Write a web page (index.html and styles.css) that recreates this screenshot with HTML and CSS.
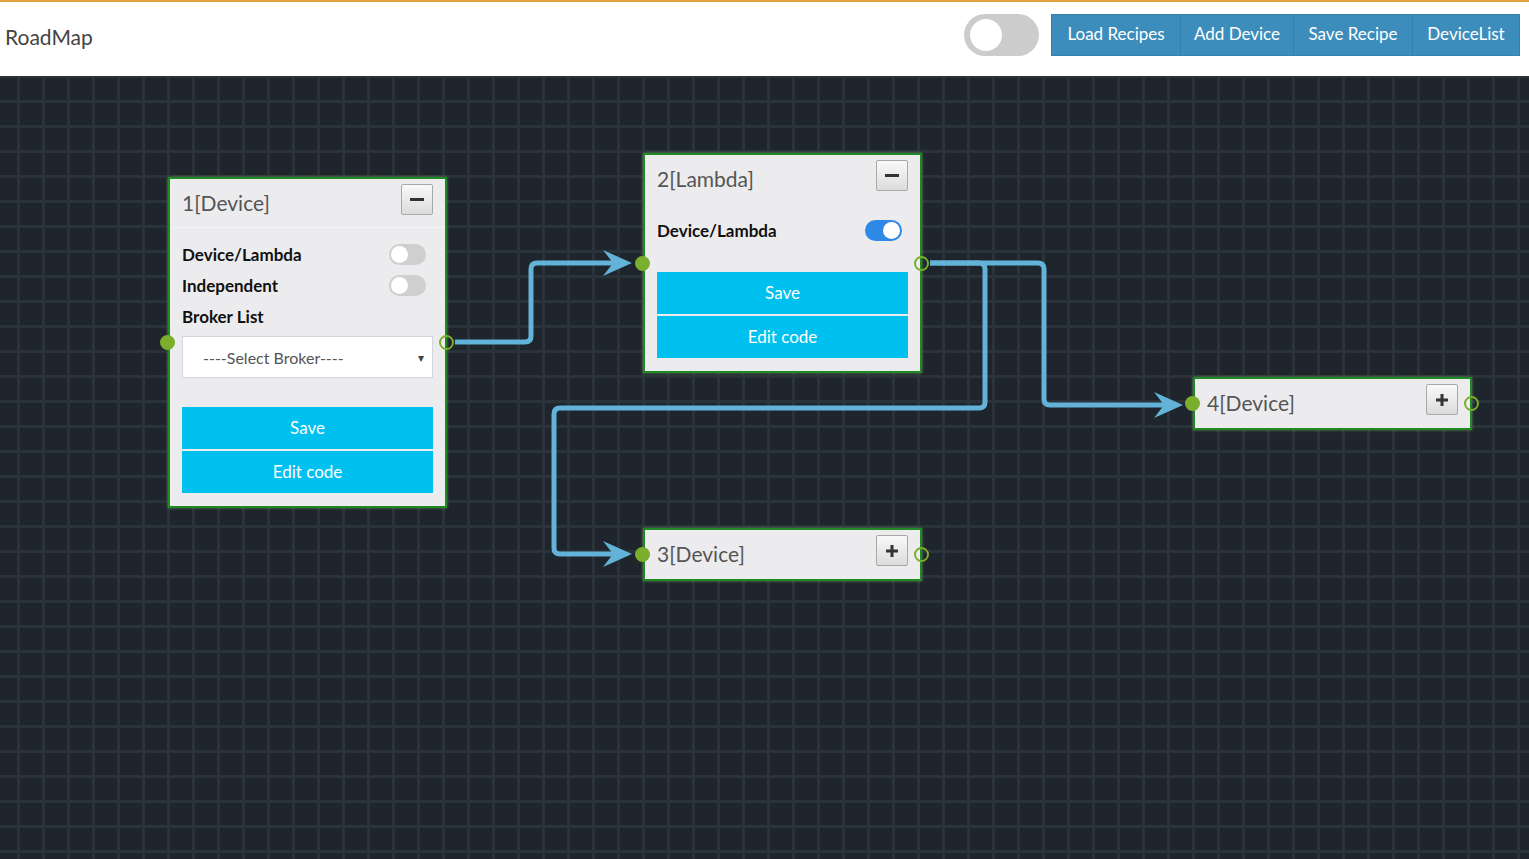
FILE: index.html
```html
<!DOCTYPE html>
<html lang="en">
<head>
<meta charset="utf-8">
<title>RoadMap</title>
<link rel="stylesheet" href="styles.css">
</head>
<body>
<header class="topbar">
  <div class="brand">RoadMap</div>
  <div class="actions-bar">
    <div class="big-toggle"><span class="big-knob"></span></div>
    <div class="btn-group">
      <button class="tb-btn tb-load">Load Recipes</button>
      <button class="tb-btn tb-add">Add Device</button>
      <button class="tb-btn tb-save">Save Recipe</button>
      <button class="tb-btn tb-list">DeviceList</button>
    </div>
  </div>
</header>
<main class="canvas">
  <svg class="wires" width="1529" height="783" viewBox="0 76 1529 783" xmlns="http://www.w3.org/2000/svg">
    <g fill="none" stroke="#62b3d7" stroke-width="5" stroke-linejoin="round">
      <path d="M455 342 H525 Q531 342 531 336 V269 Q531 263 537 263 H614"/>
      <path d="M930 263 H1038 Q1044 263 1044 269 V399 Q1044 405 1050 405 H1166"/>
      <path d="M930 263 H979 Q985 263 985 269 V402 Q985 408 979 408 H560 Q554 408 554 414 V548 Q554 554 560 554 H614"/>
    </g>
    <g fill="#62b3d7">
      <polygon points="632,263 603,250 613,263 603,276"/>
      <polygon points="1183,405 1154,392 1164,405 1154,418"/>
      <polygon points="632,554 603,541 613,554 603,567"/>
    </g>
  </svg>

  <section class="node node-1">
    <span class="port port-in"></span>
    <span class="port port-out"></span>
    <div class="node-head head-line">
      <span class="node-title">1[Device]</span>
      <span class="node-btn"><span class="minus"></span></span>
    </div>
    <div class="node-body">
      <div class="row"><span>Device/Lambda</span><span class="toggle"></span></div>
      <div class="row"><span>Independent</span><span class="toggle"></span></div>
      <div class="row"><span>Broker List</span></div>
      <div class="select"><span>----Select Broker----</span><span class="caret">&#9662;</span></div>
      <div class="node-actions gap-29">
        <div class="info-btn">Save</div>
        <div class="info-btn">Edit code</div>
      </div>
    </div>
  </section>

  <section class="node node-2">
    <span class="port port-in"></span>
    <span class="port port-out"></span>
    <div class="node-head">
      <span class="node-title">2[Lambda]</span>
      <span class="node-btn"><span class="minus"></span></span>
    </div>
    <div class="node-body">
      <div class="row"><span>Device/Lambda</span><span class="toggle on"></span></div>
      <div class="node-actions gap-26">
        <div class="info-btn">Save</div>
        <div class="info-btn">Edit code</div>
      </div>
    </div>
  </section>

  <section class="node node-3">
    <span class="port port-in"></span>
    <span class="port port-out"></span>
    <div class="node-head">
      <span class="node-title">3[Device]</span>
      <span class="node-btn"><svg width="14" height="14" viewBox="0 0 14 14"><path d="M5.5 1h3v4.5H13v3H8.5V13h-3V8.5H1v-3h4.5z" fill="#333"/></svg></span>
    </div>
  </section>

  <section class="node node-4">
    <span class="port port-in"></span>
    <span class="port port-out"></span>
    <div class="node-head">
      <span class="node-title">4[Device]</span>
      <span class="node-btn"><svg width="14" height="14" viewBox="0 0 14 14"><path d="M5.5 1h3v4.5H13v3H8.5V13h-3V8.5H1v-3h4.5z" fill="#333"/></svg></span>
    </div>
  </section>
</main>
</body>
</html>
```
FILE: styles.css
```css
html, body {
  margin: 0;
  padding: 0;
}
body {
  font-family: Lato, "Open Sans", "Liberation Sans", sans-serif;
  width: 1529px;
  height: 859px;
  overflow: hidden;
  background: #1e252c;
}
.topbar {
  box-sizing: border-box;
  height: 76px;
  border-top: 2px solid #e3a33f;
  background: #fff;
  display: flex;
  justify-content: space-between;
  align-items: flex-start;
  padding: 12px 9px 0 5px;
}
.brand {
  font-size: 21px;
  line-height: 42px;
  margin-top: 2px;
  color: #444;
  padding-left: 0;
}
.actions-bar {
  display: flex;
  align-items: center;
  gap: 12px;
}
.big-toggle {
  width: 75px;
  height: 42px;
  border-radius: 21px;
  background: #cccccc;
  position: relative;
}
.big-knob {
  position: absolute;
  left: 6px;
  top: 5px;
  width: 32px;
  height: 32px;
  border-radius: 50%;
  background: #fff;
}
.btn-group {
  display: flex;
}
.tb-btn {
  height: 42px;
  box-sizing: border-box;
  border: 1px solid #367fa9;
  background: #3c8dbc;
  color: #fff;
  font-family: Lato, "Open Sans", "Liberation Sans", sans-serif;
  font-size: 17px;
  line-height: 38px;
  padding: 0 0 2px;
  margin: 0 0 0 -1px;
}
.tb-load { width: 130px; margin-left: 0; }
.tb-add { width: 114px; }
.tb-save { width: 120px; }
.tb-list { width: 108px; }

.canvas {
  position: relative;
  height: 783px;
  background-color: #1e252c;
  background-image:
    linear-gradient(to right, #2a323a 3px, transparent 3px),
    linear-gradient(to bottom, #2a323a 3px, transparent 3px);
  background-size: 25px 25px, 25px 25px;
  background-position: 17px 0, 0 24px;
}
.wires {
  position: absolute;
  left: 0;
  top: 0;
}
.node {
  position: absolute;
  width: 279px;
  box-sizing: border-box;
  background: #ececee;
  border: 2px solid #1f8a22;
  box-shadow: 0 0 3px rgba(140, 200, 120, 0.55);
}
.node-1 { left: 168px; top: 101px; }
.node-2 { left: 643px; top: 77px; }
.node-3 { left: 643px; top: 452px; }
.node-4 { left: 1193px; top: 301px; }

.port {
  position: absolute;
  top: 50%;
  width: 15px;
  height: 15px;
  margin-top: -7.5px;
  border-radius: 50%;
  box-sizing: border-box;
}
.port-in {
  left: -10.5px;
  background: #7aae2c;
}
.port-out {
  right: -9px;
  border: 2.5px solid #7aae2c;
  background: transparent;
}
.node-head {
  display: flex;
  justify-content: space-between;
  align-items: flex-start;
  height: 49px;
  box-sizing: border-box;
  padding: 5px 12px 0 12px;
}
.head-line {
  border-bottom: 1px solid #f3f3f5;
}
.node-title {
  font-size: 21px;
  line-height: 37px;
  color: #555;
}
.node-btn {
  width: 32px;
  height: 31px;
  box-sizing: border-box;
  border: 1px solid #a8a8a8;
  border-radius: 2px;
  background: linear-gradient(#f9f9f9, #dcdcdc);
  display: flex;
  align-items: center;
  justify-content: center;
}
.minus {
  width: 14px;
  height: 3px;
  background: #333;
}
.node-body {
  padding: 11px 12px 13px;
}
.row {
  display: flex;
  justify-content: space-between;
  align-items: center;
  height: 31px;
  font-size: 17px;
  font-weight: 700;
  color: #111;
}
.toggle {
  width: 37px;
  height: 21px;
  border-radius: 11px;
  background: #cfcfcf;
  position: relative;
  margin-right: 7px;
}
.toggle::after {
  content: "";
  position: absolute;
  left: 2px;
  top: 2px;
  width: 17px;
  height: 17px;
  border-radius: 50%;
  background: #fff;
}
.toggle.on {
  background: #2e88e6;
  margin-right: 6px;
}
.toggle.on::after {
  left: 18px;
}
.select {
  margin-top: 4px;
  height: 42px;
  box-sizing: border-box;
  border: 1px solid #d2d6de;
  background: #fff;
  display: flex;
  align-items: center;
  justify-content: space-between;
  padding: 0 8px 0 20px;
  font-size: 16px;
  color: #555;
}
.caret {
  font-size: 12px;
  color: #444;
}
.node-actions {
  display: flex;
  flex-direction: column;
  gap: 2px;
}
.gap-29 { margin-top: 29px; }
.gap-26 { margin-top: 26px; }
.info-btn {
  height: 42px;
  background: #00c0ef;
  color: #fff;
  font-size: 17px;
  display: flex;
  align-items: center;
  justify-content: center;
  padding-bottom: 1px;
  box-sizing: border-box;
}
```
